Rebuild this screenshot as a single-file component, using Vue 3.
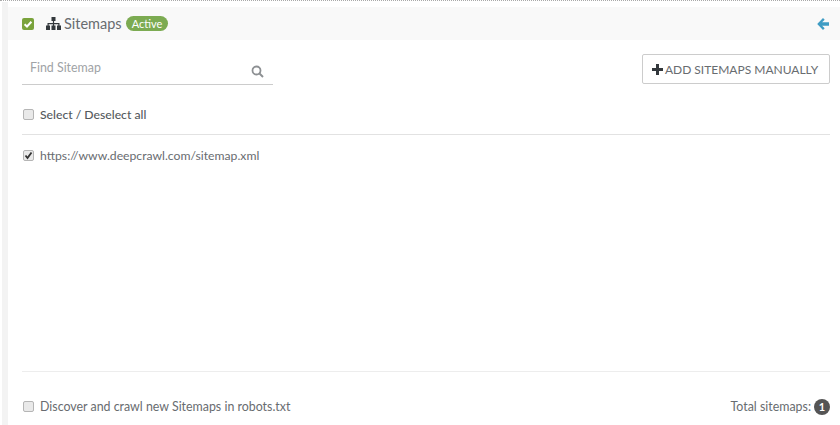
<script setup>
const url = 'https://www.deepcrawl.com/sitemap.xml'
</script>

<template>
  <div class="page">
    <div class="dots"></div>
    <div class="shell">
      <aside class="rail"></aside>
      <main class="panel">
        <header class="head">
          <span class="green-box">
            <svg width="10" height="10" viewBox="0 0 10 10"><path d="M1.600 5.200 4 7.500 8.400 2.800" fill="none" stroke="#fff" stroke-width="2"/></svg>
          </span>
          <svg class="tree" width="15" height="13" viewBox="0 0 15 13">
            <path d="M5.500 0h4v4h-4zM6.900 4h1.200v2h5.400v2.500h-1.200V7.200H8.100v1.300H6.900V7.200H2.700v1.300H1.500V6h5.400zM0 8.500h4V13H0zM5.500 8.500h4V13h-4zM11 8.500h4V13h-4z" fill="#33383c"/>
          </svg>
          <span class="title">Sitemaps</span>
          <span class="badge">Active</span>
          <svg class="back" width="12" height="12" viewBox="0 0 12 12"><path d="M6 0 .2 6 6 12l1.700-1.700-2.600-2.500H12V4.200H5.100l2.600-2.500z" fill="#3f9cc4"/></svg>
        </header>

        <section class="tools">
          <div class="search">
            <span>Find Sitemap</span>
            <svg width="13" height="13" viewBox="0 0 13 13"><circle cx="5.500" cy="5.500" r="4" fill="none" stroke="#8d9093" stroke-width="1.800"/><path d="m8.500 8.500 3.500 3.500" stroke="#8d9093" stroke-width="2"/></svg>
          </div>
          <button class="add">
            <svg width="11" height="11" viewBox="0 0 11 11"><path d="M4 0h3v4h4v3H7v4H4V7H0V4h4z" fill="#33383c"/></svg>
            ADD SITEMAPS MANUALLY
          </button>
        </section>

        <label class="row all"><span class="box"></span><span>Select / Deselect all</span></label>
        <label class="row item">
          <span class="box">
            <svg width="11" height="11" viewBox="0 0 11 11"><path d="M2.500 5.500 4.500 8 8.500 2.500" fill="none" stroke="#333" stroke-width="1.800"/></svg>
          </span>
          <span>{{ url }}</span>
        </label>

        <footer class="foot">
          <label class="row"><span class="box"></span><span>Discover and crawl new Sitemaps in robots.txt</span></label>
          <div class="total">Total sitemaps:<span class="count">1</span></div>
        </footer>
      </main>
    </div>
  </div>
</template>

<style scoped>
.page {
  width: 840px;
  height: 425px;
  overflow: hidden;
  background: #fff;
  font-family: Lato, "Liberation Sans", sans-serif;
  font-size: 12.4px;
  color: #686c70;
  box-sizing: border-box;
}
.dots {
  height: 1px;
  margin-bottom: 1px;
  border-top: 1px dotted #a9a9a9;
  box-sizing: border-box;
}
.shell {
  display: flex;
  height: 423px;
  padding-left: 2px;
}
.rail {
  width: 6px;
  background: #f3f3f3;
}
.panel {
  flex: 1;
  display: flex;
  flex-direction: column;
  padding-top: 5px;
  min-width: 0;
}
.head {
  height: 33px;
  display: flex;
  align-items: center;
  background: #f9f9f9;
  padding: 0 11px 0 14px;
}
.green-box {
  width: 12px;
  height: 12px;
  border-radius: 2px;
  background: #7aa33c;
  display: flex;
  align-items: center;
  justify-content: center;
  margin-right: 12px;
}
.tree { margin-right: 3px; }
.title {
  font-size: 14.500px;
  color: #686c70;
}
.badge {
  margin-left: 4px;
  height: 15px;
  line-height: 15px;
  padding: 0 6px;
  border-radius: 8px;
  background: #7cab52;
  color: #fff;
  font-size: 11px;
}
.back { margin-left: auto; }
.tools {
  display: flex;
  justify-content: space-between;
  align-items: flex-start;
  padding: 14px 10px 0 14px;
}
.search {
  width: 251px;
  height: 31px;
  box-sizing: border-box;
  border-bottom: 1px solid #ccc;
  display: flex;
  align-items: center;
  justify-content: space-between;
  padding: 0 9px 0 8px;
  color: #a0a3a6;
}
.search svg { margin-top: 4px; }
.search span { margin-bottom: 3px; }
.add {
  width: 188px;
  height: 30px;
  margin: 0;
  padding: 0 2px 0 0;
  border: 1px solid #ccc;
  border-radius: 2px;
  background: #fff;
  font: inherit;
  font-size: 12px;
  color: #686c70;
  display: flex;
  align-items: center;
  justify-content: center;
  gap: 2px;
}
.row {
  display: flex;
  align-items: center;
}
.box {
  width: 11px;
  height: 11px;
  box-sizing: border-box;
  margin: 0 6px 0 1px;
  border: 1px solid #b5b5b5;
  border-radius: 2px;
  background: #e9e9e9;
  display: flex;
  align-items: center;
  justify-content: center;
  flex: none;
}
.box svg { flex: none; }
.all {
  margin: 1px 10px 0 14px;
  height: 49px;
  padding-top: 9px;
  box-sizing: border-box;
  border-bottom: 1px solid #e2e2e2;
  font-weight: 500;
  font-size: 12.200px;
  color: #54595d;
}
.item {
  margin: 0 0 0 14px;
  height: 41px;
  font-size: 12.200px;
}
.foot {
  margin: auto 10px 0 14px;
  height: 54px;
  border-top: 1px solid #ededed;
  display: flex;
  align-items: center;
  justify-content: space-between;
  padding-top: 16px;
  box-sizing: border-box;
}
.total {
  display: flex;
  align-items: center;
  gap: 3px;
}
.count {
  width: 16px;
  height: 16px;
  border-radius: 50%;
  background: #555;
  color: #fff;
  font-size: 11px;
  font-weight: 700;
  text-align: center;
  line-height: 16px;
}
</style>
